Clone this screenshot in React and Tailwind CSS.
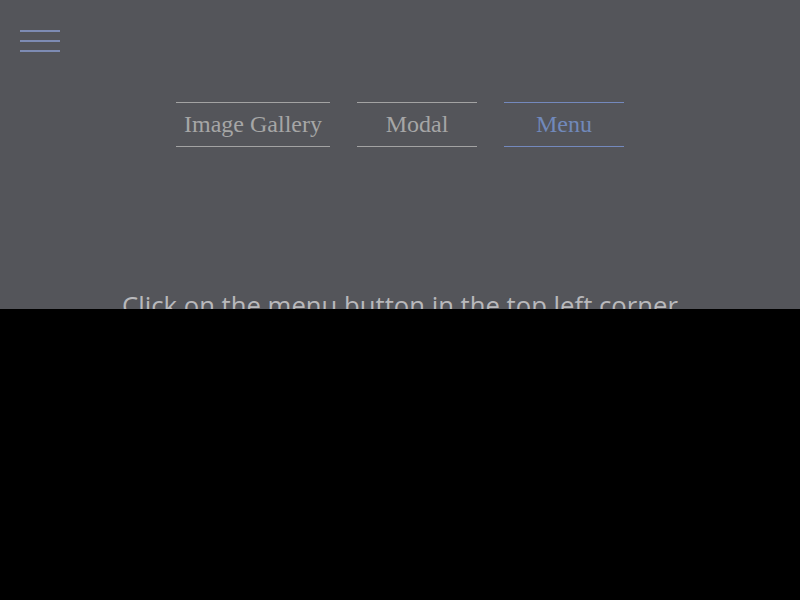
import React from 'react';

const tabs = [
  { label: 'Image Gallery', width: 'w-[154px]', active: false },
  { label: 'Modal', width: 'w-[120px]', active: false },
  { label: 'Menu', width: 'w-[120px]', active: true },
];

const App = () => {
  return (
    <div className="min-h-screen bg-black">
      <div className="h-[309px] overflow-hidden bg-[#54555a]">
        {/* menu button */}
        <div className="pt-[30px] pl-5">
          <button className="flex w-10 flex-col gap-2">
            <span className="block h-[2px] w-10 bg-[#7d8bb3]" />
            <span className="block h-[2px] w-10 bg-[#7d8bb3]" />
            <span className="block h-[2px] w-10 bg-[#7d8bb3]" />
          </button>
        </div>

        <nav className="mt-[50px] flex justify-center gap-[27px]">
          {tabs.map((tab) => (
            <button
              key={tab.label}
              className={`${tab.width} h-[45px] border-y pb-[2px] text-[24px] leading-none ${
                tab.active
                  ? 'border-[#7489bd] text-[#7189bb]'
                  : 'border-[#a3a3a3] text-[#a6a6a6]'
              }`}
              style={{ fontFamily: '"Liberation Serif", serif' }}
            >
              {tab.label}
            </button>
          ))}
        </nav>

        <p
          className="mt-[140px] text-center text-[25.7px] text-[#b9b9bc]"
          style={{ fontFamily: '"Open Sans", sans-serif' }}
        >
          Click on the menu button in the top left corner
        </p>
      </div>
    </div>
  );
};

export default App;
